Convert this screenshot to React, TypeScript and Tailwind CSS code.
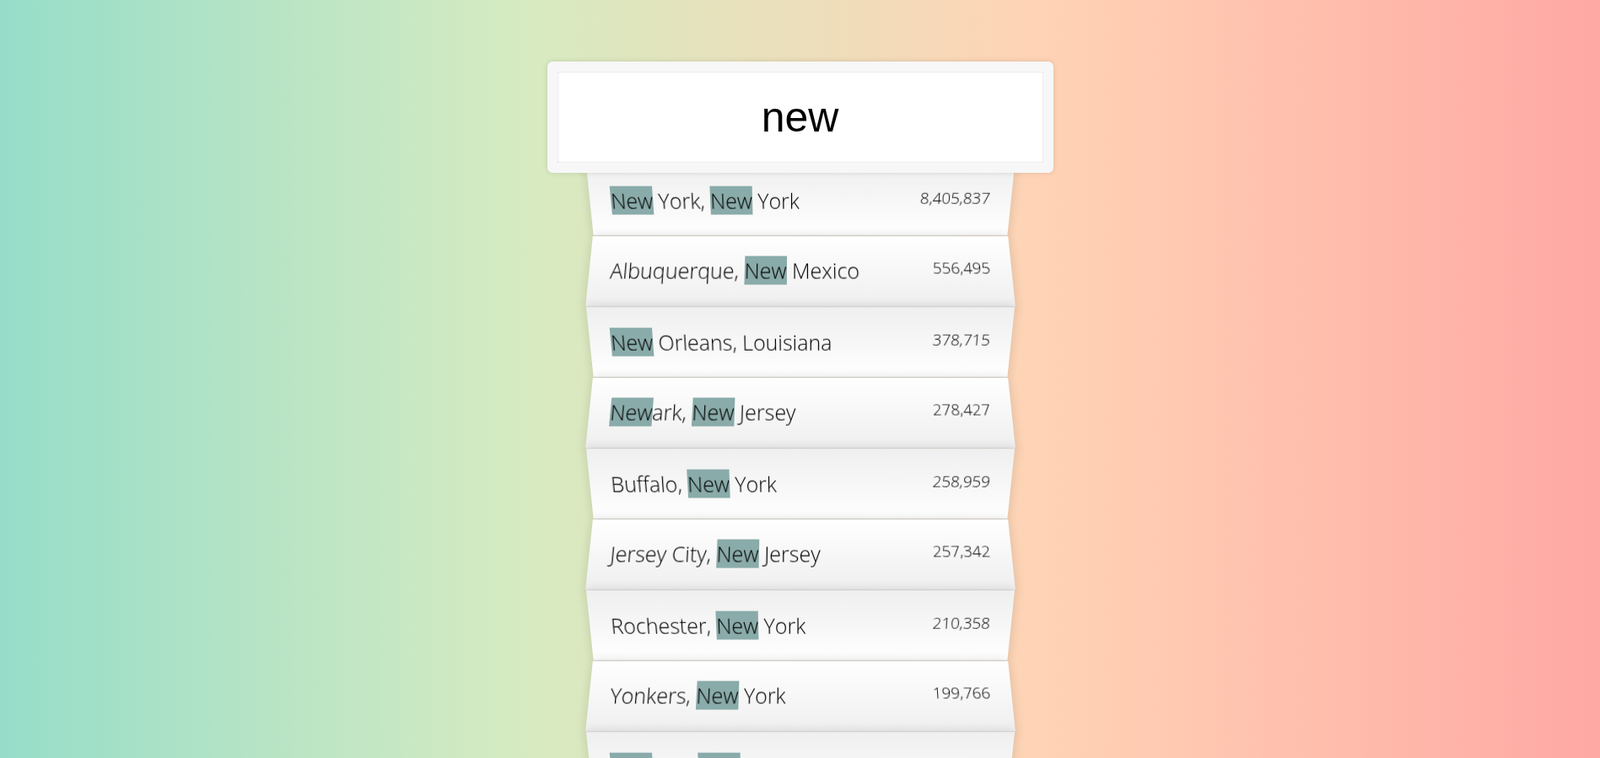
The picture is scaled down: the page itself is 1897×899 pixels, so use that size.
const cities = [
  { parts: [["New", true], [" York, ", false], ["New", true], [" York", false]], population: "8,405,837" },
  { parts: [["Albuquerque, ", false], ["New", true], [" Mexico", false]], population: "556,495" },
  { parts: [["New", true], [" Orleans, Louisiana", false]], population: "378,715" },
  { parts: [["New", true], ["ark, ", false], ["New", true], [" Jersey", false]], population: "278,427" },
  { parts: [["Buffalo, ", false], ["New", true], [" York", false]], population: "258,959" },
  { parts: [["Jersey City, ", false], ["New", true], [" Jersey", false]], population: "257,342" },
  { parts: [["Rochester, ", false], ["New", true], [" York", false]], population: "210,358" },
  { parts: [["Yonkers, ", false], ["New", true], [" York", false]], population: "199,766" },
  { parts: [["New", true], ["port ", false], ["New", true], ["s, Virginia", false]], population: "180,719" },
  { parts: [["New", true], [" Haven, Connecticut", false]], population: "130,660" },
] as { parts: [string, boolean][]; population: string }[];

// odd rows lean back, even rows lean forward (folded paper look)
const oddRow =
  "bg-linear-to-t from-white to-[#efefef] [transform:perspective(125px)_rotateX(-3deg)_translateY(3.75px)]";
const evenRow =
  "bg-linear-to-b from-white to-[#efefef] [transform:perspective(125px)_rotateX(3deg)_translateY(2.5px)_scale(1.001)]";

export default function App() {
  return (
    <div className="h-screen w-full overflow-hidden bg-[linear-gradient(to_right,#96ddc9_0%,#d7ebc1_33%,#ffd3b5_65%,#ffa8a4_100%)] font-['Open_Sans',sans-serif] text-black">
      <form className="mx-auto my-[60px] max-w-[500px]" onSubmit={(e) => e.preventDefault()}>
        <input
          type="text"
          readOnly
          value="new"
          className="relative top-[12.5px] left-[-10%] z-[2] m-0 h-[132.5px] w-[120%] rounded-[6.25px] border-[12.5px] border-[#f7f7f7] bg-white p-[25px] text-center font-['Liberation_Sans',Arial,sans-serif] text-[50px] leading-[57.5px] text-black shadow-[0_0_6.25px_rgba(0,0,0,0.12),inset_0_0_2.5px_rgba(0,0,0,0.19)] outline-0"
        />
        <ul className="relative m-0 list-none p-0">
          {cities.map((city, index) => (
            <li
              key={index}
              className={`flex justify-between border-b border-[#d8d8d8] p-[25px] text-[25px] leading-[33px] font-[350] capitalize shadow-[0_0_12.5px_rgba(0,0,0,0.14)] ${index % 2 === 0 ? oddRow : evenRow}`}
            >
              <span>
                {city.parts.map(([text, hl], i) =>
                  hl ? (
                    <span key={i} className="bg-[#89aba9]">
                      {text}
                    </span>
                  ) : (
                    <span key={i} className="whitespace-pre">{text}</span>
                  )
                )}
              </span>
              <span className="text-[18.75px] leading-[25px]">{city.population}</span>
            </li>
          ))}
        </ul>
      </form>
    </div>
  );
}
